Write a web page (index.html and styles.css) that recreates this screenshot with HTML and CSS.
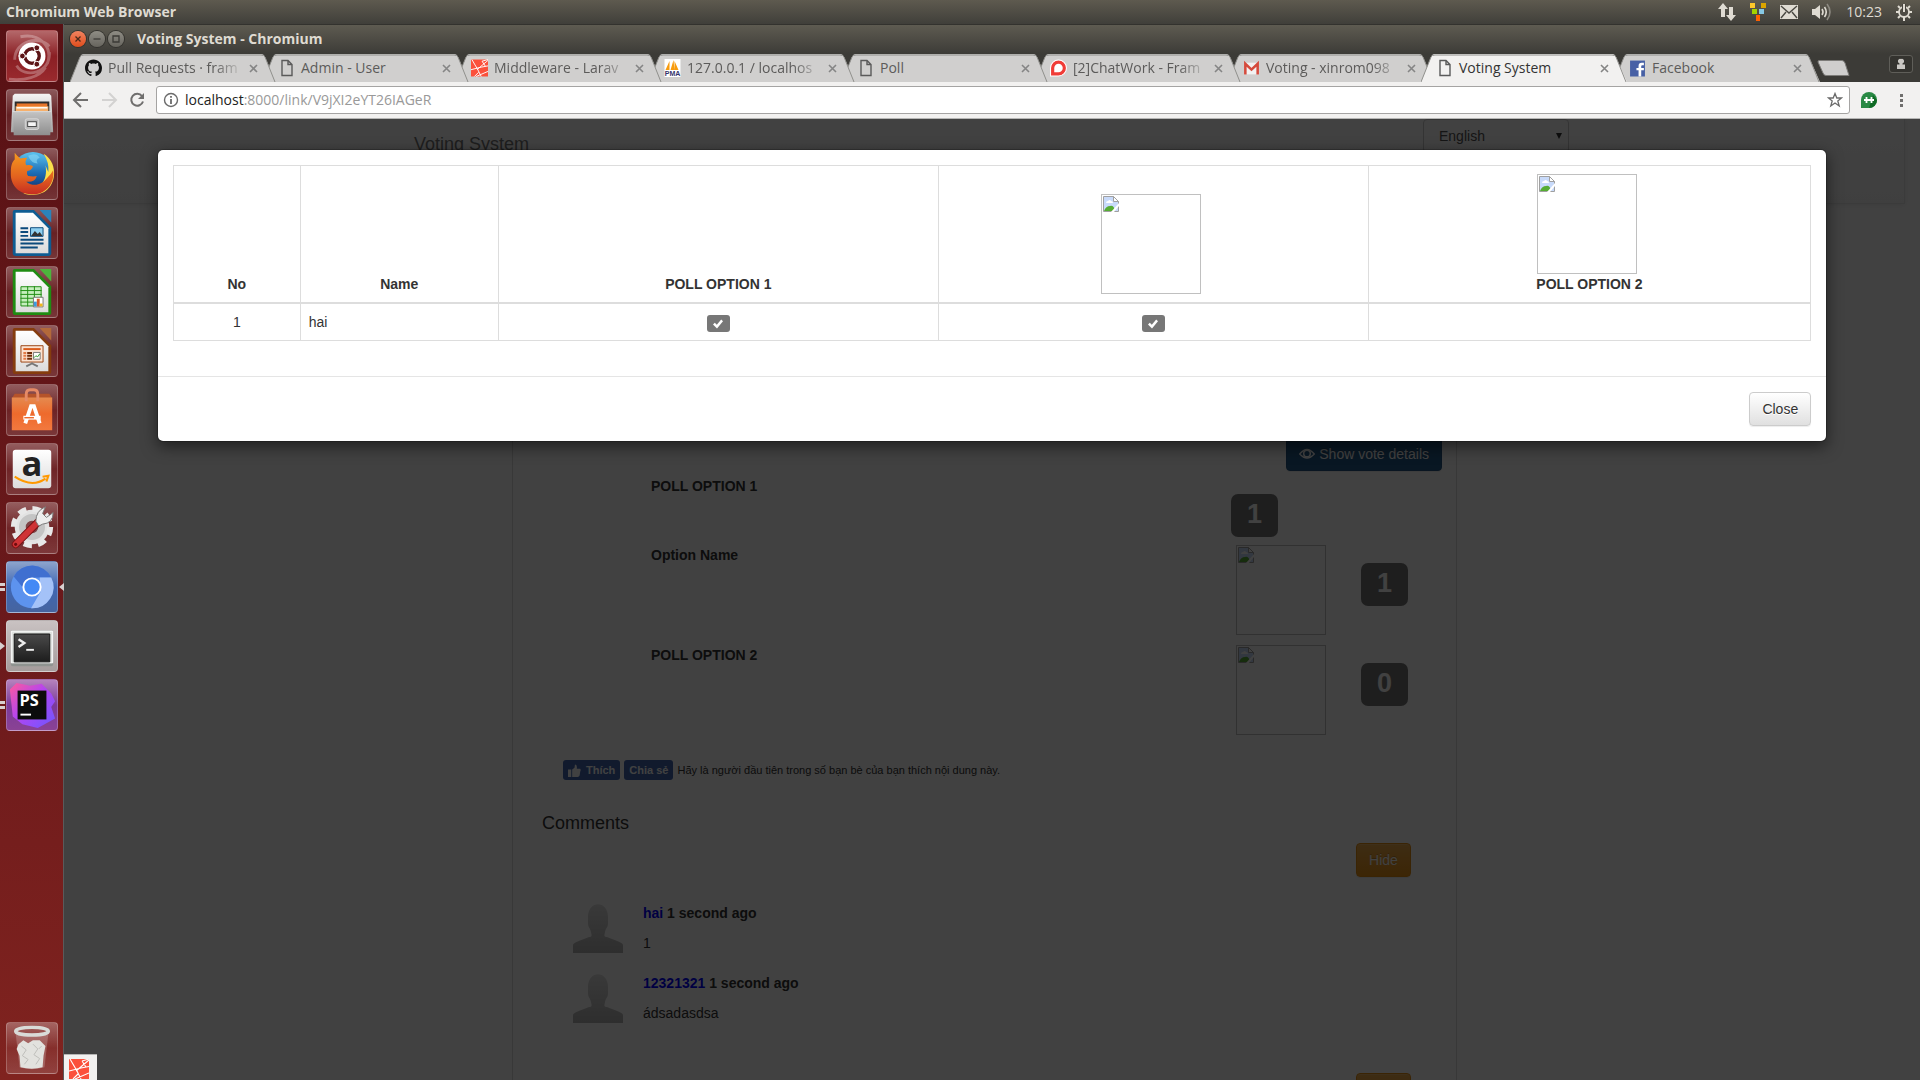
FILE: index.html
```html
<!DOCTYPE html>
<html lang="en">
<head>
<meta charset="utf-8">
<title>Voting System</title>
<link rel="stylesheet" href="styles.css">
</head>
<body>
<svg class="defs" aria-hidden="true">
  <defs>
    <linearGradient id="steel" x1="0" y1="0" x2="0" y2="1"><stop offset="0" stop-color="#f4f4f4"/><stop offset="1" stop-color="#a2a2a2"/></linearGradient>
    <linearGradient id="drawer" x1="0" y1="0" x2="0" y2="1"><stop offset="0" stop-color="#c4c4c4"/><stop offset="1" stop-color="#8e8e8e"/></linearGradient>
    <linearGradient id="sheet" x1="0" y1="0" x2="0" y2="1"><stop offset="0" stop-color="#ffffff"/><stop offset="1" stop-color="#dcdcdc"/></linearGradient>
    <linearGradient id="sky" x1="0" y1="0" x2="0" y2="1"><stop offset="0" stop-color="#5cc4ef"/><stop offset=".5" stop-color="#1e6fb8"/><stop offset="1" stop-color="#0b2a66"/></linearGradient>
    <linearGradient id="fox" x1="0" y1="0" x2="0" y2="1"><stop offset="0" stop-color="#f59a1f"/><stop offset=".6" stop-color="#e2601f"/><stop offset="1" stop-color="#c62d22"/></linearGradient>
    <linearGradient id="bag" x1="0" y1="0" x2="0" y2="1"><stop offset="0" stop-color="#e58a4f"/><stop offset=".5" stop-color="#ee6a2c"/><stop offset="1" stop-color="#f2793f"/></linearGradient>
    <linearGradient id="screen" x1="0" y1="0" x2="0" y2="1"><stop offset="0" stop-color="#4a4a4a"/><stop offset="1" stop-color="#1d1d1d"/></linearGradient>
    <linearGradient id="blob" x1="0" y1="0" x2="1" y2="1"><stop offset="0" stop-color="#ff5a9a"/><stop offset=".45" stop-color="#b345f1"/><stop offset="1" stop-color="#6b57ff"/></linearGradient>
    <linearGradient id="person" x1="0" y1="0" x2="0" y2="1"><stop offset="0" stop-color="#e0e0e0"/><stop offset="1" stop-color="#b4b4b4"/></linearGradient>
    <symbol id="tab-shape" viewBox="0 0 206 28" preserveAspectRatio="none">
      <path d="M0 28 L10 3 Q11 0 14 0 H191 Q194 0 195 3 L206 28Z" fill="currentColor"/>
      <path d="M0 28 L10 3 Q11 1 14 1 H191 Q194 1 195 3 L205 28" fill="none" stroke="#8f8f8c" vector-effect="non-scaling-stroke"/>
    </symbol>
    <symbol id="close-x" viewBox="0 0 9 9"><path d="M1 1 L8 8 M8 1 L1 8" fill="none" stroke="#858585" stroke-width="1.6"/></symbol>
    <symbol id="doc" viewBox="0 0 16 18"><path d="M3.500 1.500 H9.500 L13.500 5.500 V16.500 H3.500Z M9.500 1.500 V5.500 H13.500" fill="none" stroke="#5a5a5a" stroke-width="1.4"/></symbol>
    <symbol id="laravel" viewBox="0 0 20 20">
      <path fill="#fb503b" d="M0 0H20V20H0Z"/>
      <path fill="none" stroke="#fff" stroke-width="1.1" d="M0 12 L12 9 L20 7.500 M1 0 L8 12 L12 20 M6 20 L20 14 M7 12 L20 1 M13 2 L20 0 M13 2 L17 8 M4 20 L9 15"/>
    </symbol>
    <symbol id="broken" viewBox="0 0 16 16">
      <path d="M.5 .5 H10.500 L15.500 5.500 V15.500 H.5Z" fill="#c8dafa" stroke="#a0a0a0"/>
      <path d="M10.500 .5 V5.500 H15.500Z" fill="#fff" stroke="#a0a0a0"/>
      <path d="M3 7 q0-2 2-2 q2-2 3 0 q2 0 2 2Z" fill="#fff"/>
      <path d="M1 15 Q3 10 7 10 Q11 9 12 15Z" fill="#56ad33"/>
      <path d="M8 16 L16 7 V10 L11 16Z" fill="#fff"/>
    </symbol>
    <symbol id="check" viewBox="0 0 12 12"><path d="M1 6.500 L2.800 4.700 L4.800 6.700 L9.200 1.500 L11 3.200 L5 10.500Z" fill="#fff"/></symbol>
    <symbol id="avatar" viewBox="0 0 50 50"><path d="M15 14 C15 -3 35 -3 35 14 V20 C35 25 33 24 32 29 C31 33 31 34 34 34 C40 37 50 39 50 42 V50 H0 V42 C0 39 10 37 16 34 C19 34 19 33 18 29 C17 24 15 25 15 20Z" fill="url(#person)"/></symbol>
  </defs>
</svg>

<header class="panel">
  <span class="panel-title">Chromium Web Browser</span>
  <div class="indicators">
    <svg width="18" height="20" viewBox="0 0 18 20"><path fill="#dfdbd2" d="M5 1 L10 7 H7 V15 H3 V7 H0Z M13 19 L8 13 H11 V5 H15 V13 H18Z"/></svg>
    <svg width="16" height="18" viewBox="0 0 16 18"><path fill="#fcc72b" d="M0 0H5V5H0Z"/><path fill="#dba400" d="M11 0H16V5H11Z"/><path fill="#a4d300" d="M2 6H7V11H2Z"/><path fill="#86c8e4" d="M9 6H14V11H9Z"/><path fill="#ff5f00" d="M6 12H10V18H6Z"/></svg>
    <svg width="18" height="14" viewBox="0 0 18 14"><path fill="#dfdbd2" d="M0 0H18V14H0Z"/><path fill="none" stroke="#4a4842" stroke-width="1.4" d="M1 1 L9 8 L17 1 M1 13 L6 7 M17 13 L12 7"/></svg>
    <svg width="20" height="18" viewBox="0 0 20 18"><path fill="#dfdbd2" d="M0 6H3L8 2V16L3 12H0Z"/><path fill="none" stroke="#dfdbd2" stroke-width="1.6" d="M10 6 Q12 9 10 12 M12.500 4 Q16 9 12.500 14"/><path fill="none" stroke="#8d8a82" stroke-width="1.600" d="M15 1 Q21 9 15 17"/></svg>
    <time class="clock">10:23</time>
    <svg width="16" height="18" viewBox="0 0 16 18"><circle cx="8" cy="9" r="5" fill="none" stroke="#dfdbd2" stroke-width="1.800"/><path d="M8 1V9" stroke="#46443e" stroke-width="4"/><path stroke="#dfdbd2" stroke-width="2" d="M8 1V9 M8 14V18 M0 9H3 M13 9H16 M2 3L4 5 M14 3L12 5 M2 15L4 13 M14 15L12 13"/></svg>
  </div>
</header>

<div class="desktop">
  <nav class="launcher" aria-label="Launcher">
    <button class="tile tile-dash" aria-label="Dash"><svg viewBox="0 0 52 52">
      <path d="M8 30 C8 10 34 4 44 16 M44 22 C46 44 18 50 10 36 M14 6 C34 2 48 16 42 34 M2 50 C18 52 34 48 40 38" fill="none" stroke="#fff" stroke-opacity=".28" stroke-width="3"/>
      <circle cx="26" cy="26" r="14" fill="#fff"/><circle cx="26" cy="26" r="7.500" fill="none" stroke="#5c1517" stroke-width="3.600"/>
      <path d="M26 26 L12 26 M26 26 L33 14 M26 26 L33 38" stroke="#fff" stroke-width="1.600"/>
      <circle cx="26" cy="26" r="5.500" fill="#fff"/>
      <g fill="#5c1517" stroke="#fff"><circle cx="16" cy="26" r="3"/><circle cx="31" cy="17.500" r="3"/><circle cx="31" cy="34.500" r="3"/></g></svg></button>
    <button class="tile" aria-label="Files"><svg viewBox="0 0 52 52">
      <path d="M6 6 L8 4 H44 L46 6 L48 44 H4Z" fill="url(#steel)"/><path d="M8 12H44V23H8Z" fill="#2d2d2d"/><path d="M10 14H42V22H10Z" fill="#e8762b"/><path d="M9 17H43V22H9Z" fill="#f7b06b"/><path d="M10 18.500H42" stroke="#fff" stroke-width="1.500"/>
      <path d="M6 22 H46 L45 47 H7Z" fill="url(#drawer)"/><path d="M6 22.500H46" stroke="#dedede"/><rect x="19" y="30" width="14" height="11" rx="2" fill="#b9b9b9" stroke="#dadada"/><rect x="21.500" y="33" width="9" height="5" fill="#f5f5f5" stroke="#444"/></svg></button>
    <button class="tile" aria-label="Firefox"><svg viewBox="0 0 52 52">
      <circle cx="27" cy="24" r="21" fill="url(#sky)"/>
      <path d="M22 7 q8-4 12 2 q-5 2-2 6 q-7 0-10-8Z" fill="#8bd8f5" fill-opacity=".6"/>
      <path d="M38 5 C52 13 52 34 42 42 C36 48 24 49 17 46 C34 44 43 33 40 17 Q42 22 43 24 Q44 14 38 5Z" fill="#f9e04c"/>
      <path d="M48 22 C50 38 38 48 25 47 C12 47 3 37 4 24 C4 16 6 13 8 11 Q8 6 8 4 Q11 8 14 10 Q17 9 21 9 Q18 13 20 17 Q24 16 27 18 Q26 22 21 23 Q20 26 22 28 Q28 29 31 28 Q29 35 20 34 C28 40 36 37 41 31 Q46 26 48 22Z" fill="url(#fox)"/></svg></button>
    <button class="tile" aria-label="Writer"><svg viewBox="0 0 52 52">
      <path d="M8 2 H28 L46 20 V47 Q46 50 43 50 H9 Q6 50 6 47 V4 Q6 2 8 2Z" fill="#0e5c92"/><path d="M34 2 H46 V15Z" fill="#2b83ba"/><path d="M9 5 H27 L43 21 V47 H9Z" fill="url(#sheet)"/>
      <path stroke="#0b4a7c" stroke-width="2" d="M14 21H22 M14 25H22 M14 29H22 M14 33H38 M14 37H38 M14 41H32"/><path d="M24.500 20.500H37.500V29.500H24.500Z" fill="#8fd0f0" stroke="#0b4a7c"/><path d="M25 29 L29 24 L32 27 L34 25 L37 29Z" fill="#333"/></svg></button>
    <button class="tile" aria-label="Calc"><svg viewBox="0 0 52 52">
      <path d="M8 2 H28 L46 20 V47 Q46 50 43 50 H9 Q6 50 6 47 V4 Q6 2 8 2Z" fill="#1f8c12"/><path d="M34 2 H46 V15Z" fill="#4db53c"/><path d="M9 5 H27 L43 21 V47 H9Z" fill="url(#sheet)"/>
      <path d="M14.500 20.500H35.500V40.500H14.500Z" fill="#c6efbe" stroke="#1f8c12"/><path d="M14 24.500H36 M14 28.500H36 M14 32.500H36 M14 36.500H36 M21.500 20V41 M28.500 20V41" stroke="#1f8c12"/><path d="M27.500 31.500H37.500V41.500H27.500Z" fill="#fff" stroke="#777"/><path d="M28 36H31V41H28Z" fill="#3b9be0"/><path d="M31 33H34V41H31Z" fill="#d95a28"/><path d="M34 38H37V41H34Z" fill="#f0b81e"/></svg></button>
    <button class="tile" aria-label="Impress"><svg viewBox="0 0 52 52">
      <path d="M8 2 H28 L46 20 V47 Q46 50 43 50 H9 Q6 50 6 47 V4 Q6 2 8 2Z" fill="#853c0e"/><path d="M34 2 H46 V15Z" fill="#b3693a"/><path d="M9 5 H27 L43 21 V47 H9Z" fill="url(#sheet)"/>
      <path d="M14.500 20.500H37.500V37.500H14.500Z" fill="#fbe3d2" stroke="#9a4312"/><path d="M17 24H35" stroke="#d95a1a" stroke-width="2"/><path d="M17 28H20 M17 31H20 M17 34H20" stroke="#e27b46" stroke-width="2"/><path d="M21 28H26 M21 31H26 M21 34H26" stroke="#6f2c08" stroke-width="2"/><path d="M27.500 27.500H34.500V34.500H27.500Z" fill="#fff" stroke="#777"/><path d="M28 33L30 31L32 32L34 29" fill="none" stroke="#2c9a2c"/><path d="M26 38V40 M20 42L26 39L32 42" fill="none" stroke="#777" stroke-width="2"/></svg></button>
    <button class="tile" aria-label="Software Center"><svg viewBox="0 0 52 52">
      <path d="M5 14L8 9H44L47 14Z" fill="#b5532a"/><path d="M5 13H47V47H5Z" fill="url(#bag)"/><path d="M20 17V10Q20 5 24 5H28Q32 5 32 10V17" fill="none" stroke="#e58a66" stroke-width="3"/>
      <path d="M19 40 L25 22 H28 L34 40" fill="none" stroke="#fff" stroke-width="4"/><path d="M17 34H35" stroke="#fff" stroke-width="4"/><path d="M18 34H28" stroke="#ee6a2c" stroke-width="1.500"/></svg></button>
    <button class="tile" aria-label="Amazon"><svg viewBox="0 0 52 52">
      <rect x="6" y="6" width="40" height="40" rx="3" fill="url(#sheet)"/><text x="26" y="33" class="amazon-a">a</text><path d="M8 34 Q26 46 40 36 M37 34 L43 33 L41 39" fill="none" stroke="#f90" stroke-width="2.200"/></svg></button>
    <button class="tile" aria-label="System Settings"><svg viewBox="0 0 52 52">
      <circle cx="26" cy="25" r="18" fill="#e2e2e2"/><circle cx="26" cy="25" r="19" fill="none" stroke="#e8e8e8" stroke-width="6" stroke-dasharray="8.500 6.400"/><circle cx="26" cy="25" r="10" fill="#7e4346" stroke="#c4c4c4" stroke-width="7"/>
      <path d="M9 43 L32 20" stroke="#7a0f12" stroke-width="8" stroke-linecap="round"/><path d="M9 43 L32 20" stroke="#cf3336" stroke-width="6" stroke-linecap="round"/><circle cx="9" cy="43" r="1.600" fill="#6e0c0e"/>
      <path d="M30 19 Q30 8 40 4 L37 11 L41 15 L48 10 Q48 21 37 22 L33 24Z" fill="#ededed" stroke="#777"/></svg></button>
    <button class="tile tile-chromium" aria-label="Chromium"><svg viewBox="0 0 52 52">
      <circle cx="26" cy="26" r="22" fill="#5d93ee"/><path d="M7 15 A22 22 0 0 1 46 16 H26 L16 26Z" fill="#3f6fd0"/><path d="M46 16 A22 22 0 0 1 25 48 L35 31 L34 16Z" fill="#a4c2f8"/><circle cx="26" cy="26" r="9" fill="#4489f5" stroke="#fff" stroke-width="2"/></svg>
      <svg class="pips" viewBox="0 0 6 8"><path d="M0 0H5V3H0Z M0 5H5V8H0Z" fill="#d8d0d0"/></svg><svg class="focus" viewBox="0 0 5 8"><path d="M5 0V8L0 4Z" fill="#d8d0d0"/></svg></button>
    <button class="tile tile-terminal" aria-label="Terminal"><svg viewBox="0 0 52 52">
      <path d="M4 10H48V45Q48 47 46 47H6Q4 47 4 45Z" fill="#8f9390"/><path d="M4.500 10.500H47.500V43.500H4.500Z" fill="#dfe2df" stroke="#fff"/><path d="M7.500 13.500H44.500V42.500H7.500Z" fill="url(#screen)" stroke="#111"/><path d="M12 19L18 23L12 27" fill="none" stroke="#eee" stroke-width="2.500"/><path d="M20 30H28" stroke="#eee" stroke-width="2"/></svg>
      <svg class="pips" viewBox="0 0 6 8"><path d="M0 0L5 4L0 8Z" fill="#d8d0d0"/></svg></button>
    <button class="tile tile-storm" aria-label="PhpStorm"><svg viewBox="0 0 52 52">
      <path d="M3 10L10 3L24 6L36 4L46 14L50 22L46 28L50 40L32 50L16 46L6 38Z" fill="url(#blob)"/><path d="M11 11H41V41H11Z" fill="#0c0c0c"/><text x="13" y="27" class="storm-ps">PS</text><path d="M14 36H25" stroke="#fff" stroke-width="2"/></svg>
      <svg class="pips" viewBox="0 0 6 8"><path d="M0 0H5V3H0Z M0 5H5V8H0Z" fill="#d8d0d0"/></svg></button>
    <button class="tile tile-trash" aria-label="Trash"><svg viewBox="0 0 52 52">
      <path d="M9 11L13 46Q26 50 39 46L43 11Z" fill="#fff" fill-opacity=".2"/><path d="M12 22L17 18L22 21L27 18L34 18L40 24L38 34L37 46Q26 49 14 46L13 34L10 27Z" fill="#e2e2de"/><path d="M15 24L20 28L16 34L22 38L18 43 M27 22L32 27L28 33L34 37L30 43 M36 24L33 27" fill="none" stroke="#bdbdb9"/>
      <ellipse cx="26" cy="8.500" rx="17" ry="4" fill="none" stroke="#d9dbd8" stroke-width="3.500"/></svg></button>
  </nav>

  <main class="window">
    <div class="titlebar">
      <button class="wm wm-close" aria-label="Close window"><svg viewBox="0 0 16 16"><path d="M5.500 5.500L10.500 10.500M10.500 5.500L5.500 10.500" stroke="#4a2a1c" stroke-width="1.300"/></svg></button>
      <button class="wm" aria-label="Minimize"><svg viewBox="0 0 16 16"><path d="M4.500 8H11.500" stroke="#3b3a36" stroke-width="1.300"/></svg></button>
      <button class="wm" aria-label="Maximize"><svg viewBox="0 0 16 16"><path d="M5 5H11V11H5Z" fill="none" stroke="#3b3a36" stroke-width="1.300"/></svg></button>
      <span class="window-title">Voting System - Chromium</span>
    </div>

    <div class="tabstrip">
      <div class="tab"><svg class="shape"><use href="#tab-shape"/></svg><svg class="fav" viewBox="0 0 16 16"><path fill="#111" d="M8 0C3.580 0 0 3.580 0 8c0 3.540 2.290 6.530 5.470 7.590.4.070.55-.17.55-.38 0-.19-.01-.82-.01-1.490-2.010.37-2.530-.49-2.690-.94-.09-.23-.48-.94-.82-1.130-.28-.15-.68-.52-.01-.53.63-.01 1.080.58 1.230.82.72 1.210 1.870.87 2.330.66.07-.52.28-.87.51-1.070-1.780-.2-3.640-.89-3.640-3.950 0-.87.31-1.590.82-2.150-.08-.2-.36-1.020.08-2.120 0 0 .67-.21 2.200.82.64-.18 1.320-.27 2-.27s1.360.09 2 .27c1.530-1.040 2.200-.82 2.200-.82.44 1.100.16 1.920.08 2.120.51.56.82 1.270.82 2.150 0 3.070-1.870 3.750-3.650 3.950.29.25.54.73.54 1.480 0 1.070-.01 1.930-.01 2.200 0 .21.15.46.55.38A8.010 8.010 0 0 0 16 8c0-4.420-3.580-8-8-8z"/></svg><span class="tab-title tab-title-long">Pull Requests · fram</span><button class="tab-close" aria-label="Close tab"><svg><use href="#close-x"/></svg></button></div>
      <div class="tab"><svg class="shape"><use href="#tab-shape"/></svg><svg class="fav"><use href="#doc"/></svg><span class="tab-title">Admin - User</span><button class="tab-close" aria-label="Close tab"><svg><use href="#close-x"/></svg></button></div>
      <div class="tab"><svg class="shape"><use href="#tab-shape"/></svg><svg class="fav"><use href="#laravel"/></svg><span class="tab-title tab-title-long">Middleware - Larav</span><button class="tab-close" aria-label="Close tab"><svg><use href="#close-x"/></svg></button></div>
      <div class="tab"><svg class="shape"><use href="#tab-shape"/></svg><svg class="fav" viewBox="0 0 16 18"><path fill="#fff" d="M0 0H16V18H0Z"/><path fill="#f89c0e" d="M5 2L1 11H5Z M9 1L6 11H10Z M10 2L14 11H10Z"/><text x="8" y="17" class="pma">PMA</text></svg><span class="tab-title tab-title-long">127.0.0.1 / localhos</span><button class="tab-close" aria-label="Close tab"><svg><use href="#close-x"/></svg></button></div>
      <div class="tab"><svg class="shape"><use href="#tab-shape"/></svg><svg class="fav"><use href="#doc"/></svg><span class="tab-title">Poll</span><button class="tab-close" aria-label="Close tab"><svg><use href="#close-x"/></svg></button></div>
      <div class="tab"><svg class="shape"><use href="#tab-shape"/></svg><svg class="fav" viewBox="0 0 16 16"><path fill="#f03c37" stroke="#fff" d="M8 .5A7.500 7.500 0 1 1 8 15.500H.5V8A7.500 7.500 0 0 1 8 .5Z"/><path fill="#fff" d="M8 4A4 4 0 1 1 8 12H4V8A4 4 0 0 1 8 4Z"/></svg><span class="tab-title tab-title-long">[2]ChatWork - Fram</span><button class="tab-close" aria-label="Close tab"><svg><use href="#close-x"/></svg></button></div>
      <div class="tab"><svg class="shape"><use href="#tab-shape"/></svg><svg class="fav" viewBox="0 0 16 16"><path fill="#f2f2f2" d="M1 3H15V14H1Z"/><path fill="none" stroke="#d54b3d" stroke-width="2.400" d="M2.200 14V4L8 9.500L13.800 4V14"/></svg><span class="tab-title tab-title-long">Voting - xinrom098</span><button class="tab-close" aria-label="Close tab"><svg><use href="#close-x"/></svg></button></div>
      <div class="tab tab-active"><svg class="shape"><use href="#tab-shape"/></svg><svg class="fav"><use href="#doc"/></svg><span class="tab-title">Voting System</span><button class="tab-close" aria-label="Close tab"><svg><use href="#close-x"/></svg></button></div>
      <div class="tab"><svg class="shape"><use href="#tab-shape"/></svg><svg class="fav" viewBox="0 0 16 16"><path fill="#4760a5" d="M1 1H15V16H1Z"/><path fill="#fff" d="M9 16V10H7V8H9V6Q9 3 12 3H14V5.300H12.500Q11.500 5.300 11.500 6.300V8H14V10H11.500V16Z"/></svg><span class="tab-title">Facebook</span><button class="tab-close" aria-label="Close tab"><svg><use href="#close-x"/></svg></button></div>
      <button class="new-tab" aria-label="New tab"><svg viewBox="0 0 33 16"><path d="M2 .5H25Q27 .5 28 3L32 15.500H9Q7 15.500 6 13L1 2Q1 .5 2 .5Z" fill="#cfcecd" stroke="#7d7c79"/></svg></button>
      <button class="profile" aria-label="Profile"><svg viewBox="0 0 10 12"><path fill="#c9c7c3" d="M5 1A2.300 2.300 0 0 1 6.500 5.500V6.500H9V11H1V6.500H3.500V5.500A2.300 2.300 0 0 1 5 1Z"/></svg></button>
    </div>

    <div class="toolbar">
      <button class="tool" aria-label="Back"><svg viewBox="0 0 18 18"><path d="M9 2L2 9L9 16M2 9H16" fill="none" stroke="#6f6e6d" stroke-width="2"/></svg></button>
      <button class="tool" aria-label="Forward"><svg viewBox="0 0 18 18"><path d="M9 2L16 9L9 16M16 9H2" fill="none" stroke="#d3d2d1" stroke-width="2"/></svg></button>
      <button class="tool" aria-label="Reload"><svg viewBox="0 0 18 18"><path d="M14 5A6 6 0 1 0 15 10.500" fill="none" stroke="#6f6e6d" stroke-width="2"/><path d="M16 2V8H10Z" fill="#6f6e6d"/></svg></button>
      <div class="omnibox">
        <svg class="info" viewBox="0 0 16 16"><circle cx="8" cy="8" r="6.500" fill="none" stroke="#6b6b6b" stroke-width="1.400"/><path d="M8 4V5.800M8 7V12" stroke="#6b6b6b" stroke-width="1.800"/></svg>
        <a class="url" href="#"><span class="host">localhost</span>:8000/link/V9jXI2eYT26IAGeR</a>
        <button class="star" aria-label="Bookmark"><svg viewBox="0 0 16 16"><path d="M8 1.500L9.800 6H14.500L10.800 9L12.200 14L8 11L3.800 14L5.200 9L1.500 6H6.200Z" fill="none" stroke="#6b6b6b" stroke-width="1.300"/></svg></button>
      </div>
      <button class="tool" aria-label="Hangouts"><svg viewBox="0 0 18 18"><path d="M9 1A8 8 0 1 1 9 17H1V9A8 8 0 0 1 9 1Z" fill="#2a8a45"/><path d="M17 9A8 8 0 0 1 9 17L13 4Z" fill="#0f6b24"/><path d="M4 9H14M6.500 6V12M11.500 6V12" stroke="#fff" stroke-width="1.800"/></svg></button>
      <button class="tool tool-menu" aria-label="Menu"><svg viewBox="0 0 18 18"><path fill="#6f6e6d" d="M8 3h3v3H8Z M8 8h3v3H8Z M8 13h3v3H8Z"/></svg></button>
    </div>

    <div class="page">
      <div class="document">
        <div class="navbar">
          <div class="container">
            <a class="brand" href="#">Voting System</a>
            <div class="language">
              <select class="language-select" aria-label="Language"><option>English</option></select>
              <svg class="caret" viewBox="0 0 6 6"><path d="M0 0H6L3 6Z" fill="#333"/></svg>
            </div>
          </div>
        </div>

        <section class="card">
          <div class="details-bar">
            <button class="btn btn-primary"><svg class="eye" viewBox="0 0 16 14"><path d="M.7 7Q8-2 15.300 7Q8 15 .7 7Z" fill="none" stroke="#fff" stroke-width="1.300"/><circle cx="8" cy="6.500" r="3.300" fill="none" stroke="#fff" stroke-width="1.500"/></svg> Show vote details</button>
          </div>
          <div class="option option-text"><b class="option-name">POLL OPTION 1</b><span class="count">1</span></div>
          <div class="option"><b class="option-name">Option Name</b><span class="picture picture-small"><svg><use href="#broken"/></svg></span><span class="count">1</span></div>
          <div class="option"><b class="option-name">POLL OPTION 2</b><span class="picture picture-small"><svg><use href="#broken"/></svg></span><span class="count">0</span></div>

          <div class="social">
            <button class="fb"><svg class="thumb" viewBox="0 0 14 14"><path fill="#fff" d="M0 6H3.500V14H0Z M4.500 6L7 4L7.500 0.500Q10 .3 9.500 5H13Q14.200 6 13.200 8L12.500 12.500Q12 14 10.500 14H4.500Z"/></svg>Thích</button>
            <button class="fb">Chia sẻ</button>
            <span class="fb-note">Hãy là người đầu tiên trong số bạn bè của bạn thích nội dung này.</span>
          </div>

          <h4 class="comments-title">Comments</h4>
          <div class="hide-bar"><button class="btn btn-warning">Hide</button></div>
          <article class="comment"><svg class="avatar"><use href="#avatar"/></svg><div><p class="comment-head"><span class="author">hai</span> 1 second ago</p><p class="comment-text">1</p></div></article>
          <article class="comment"><svg class="avatar"><use href="#avatar"/></svg><div><p class="comment-head"><span class="author">12321321</span> 1 second ago</p><p class="comment-text">ádsadasdsa</p></div></article>
          <div class="hide-bar hide-bar-end"><button class="btn btn-warning" aria-label="Post"></button></div>
        </section>
      </div>

      <div class="backdrop">
        <div class="dialog" role="dialog" aria-label="Vote details">
          <div class="dialog-body">
            <table class="votes">
              <colgroup><col class="c-no"><col class="c-name"><col class="c-first"><col class="c-second"><col class="c-third"></colgroup>
              <thead><tr>
                <th>No</th><th>Name</th><th>POLL OPTION 1</th>
                <th><span class="picture picture-cell"><svg><use href="#broken"/></svg></span></th>
                <th><span class="picture picture-cell"><svg><use href="#broken"/></svg></span><br>POLL OPTION 2</th>
              </tr></thead>
              <tbody><tr>
                <td class="center">1</td><td>hai</td>
                <td class="center"><span class="tick"><svg><use href="#check"/></svg></span></td>
                <td class="center"><span class="tick"><svg><use href="#check"/></svg></span></td>
                <td></td>
              </tr></tbody>
            </table>
          </div>
          <div class="dialog-footer"><button class="btn btn-default">Close</button></div>
        </div>
      </div>

      <div class="status"><svg><use href="#laravel"/></svg></div>
    </div>
  </main>
</div>
</body>
</html>
```
FILE: styles.css
```css
* { box-sizing: border-box; }

body {
  margin: 0;
  height: 100vh;
  display: flex;
  flex-direction: column;
  overflow: hidden;
  font-family: "Liberation Sans", Arial, sans-serif;
  font-size: 14px;
  line-height: 20px;
  color: #333;
}

button {
  margin: 0;
  padding: 0;
  border: 0;
  background: none;
  font: inherit;
  color: inherit;
}

svg { display: block; }
p, h4 { margin: 0; }
.defs { position: absolute; width: 0; height: 0; }

/* top panel */
.panel {
  flex: none;
  height: 24px;
  padding: 0 8px 0 6px;
  display: flex;
  align-items: center;
  justify-content: space-between;
  background: linear-gradient(#5e5a4f, #403f3a);
  color: #dfdbd2;
  font-family: "Open Sans", "Noto Sans", sans-serif;
}
.panel-title, .window-title { font-size: 14px; font-weight: 700; }
.indicators { display: flex; align-items: center; gap: 14px; }
.clock { font-size: 14px; }

.desktop { flex: 1; min-height: 0; display: flex; }

/* launcher */
.launcher {
  flex: none;
  width: 64px;
  padding: 6px 5px 6px 6px;
  display: flex;
  flex-direction: column;
  gap: 7px;
  border-right: 1px solid #5a5a5a;
  background: linear-gradient(#581114, #6a191b 55%, #80231f);
}
.tile {
  position: relative;
  width: 52px;
  height: 52px;
  border: 1px solid rgba(255, 255, 255, .22);
  border-radius: 4px;
  background: linear-gradient(rgba(255, 255, 255, .3), rgba(255, 255, 255, .06) 50%, rgba(255, 255, 255, .14));
}
.tile > svg:first-child { width: 50px; height: 50px; }
.tile-dash { background: linear-gradient(#b4686a, #8a1f24 50%, #9a2a2e); }
.tile-chromium { background: linear-gradient(#8da4cc, #3f67b4 50%, #46649f); }
.tile-terminal { background: linear-gradient(#c9c2c2, #a59c9c); }
.tile-storm { background: linear-gradient(#b583bd, #7b3a9a 50%, #8a4294); }
.tile-trash { margin-top: auto; }
.pips { position: absolute; left: -7px; top: 21px; width: 6px; height: 8px; }
.focus { position: absolute; right: -7px; top: 21px; width: 5px; height: 8px; }
.amazon-a { font: 700 36px "Open Sans", sans-serif; text-anchor: middle; fill: #222; }
.storm-ps { font: 700 17px "Open Sans", sans-serif; fill: #fff; }

/* browser window */
.window {
  flex: 1;
  min-width: 0;
  display: flex;
  flex-direction: column;
  background: #3c3b37;
}
.titlebar {
  flex: none;
  height: 30px;
  padding: 0 6px 1px;
  display: flex;
  align-items: center;
  gap: 3px;
  background: linear-gradient(#5e5b51, #3c3b37);
  border-top: 1px solid #33322e;
  color: #dfdbd2;
  font-family: "Open Sans", "Noto Sans", sans-serif;
}
.wm {
  width: 16px;
  height: 16px;
  border-radius: 50%;
  background: linear-gradient(#8f8d85, #66645d);
  box-shadow: 0 0 0 1px #33322e;
}
.wm-close { background: linear-gradient(#f28360, #df4d1c); }
.window-title { margin-left: 10px; }

.tabstrip {
  flex: none;
  height: 28px;
  padding: 0 7px 0 6px;
  display: flex;
  isolation: isolate;
}
.tab {
  position: relative;
  flex: 0 1 206px;
  min-width: 0;
  margin-right: -13px;
  padding: 0 18px 0 15px;
  display: flex;
  align-items: center;
  color: #d0cfce;
  z-index: 1;
}
.tab:nth-child(1) { z-index: 9; }
.tab:nth-child(2) { z-index: 8; }
.tab:nth-child(3) { z-index: 7; }
.tab:nth-child(4) { z-index: 6; }
.tab:nth-child(5) { z-index: 5; }
.tab:nth-child(6) { z-index: 4; }
.tab:nth-child(7) { z-index: 3; }
.tab.tab-active { z-index: 10; color: #f2f1f0; }
.shape { position: absolute; inset: 0; z-index: -1; width: 100%; height: 100%; }
.fav { flex: none; width: 17px; height: 18px; }
.pma { font: 700 7px "Liberation Sans", sans-serif; text-anchor: middle; fill: #33336b; }
.tab-title {
  flex: 1;
  margin-left: 6px;
  white-space: nowrap;
  font-family: "Open Sans", "Noto Sans", sans-serif;
  font-size: 14px;
  color: #5c5b5a;
}
.tab-title-long {
  -webkit-mask-image: linear-gradient(90deg, #000 78%, transparent);
  mask-image: linear-gradient(90deg, #000 78%, transparent);
}
.tab-active .tab-title { color: #333; }
.tab-close { margin-left: 5px; }
.tab-close svg { width: 9px; height: 9px; }
.new-tab { align-self: center; margin-left: 10px; }
.new-tab svg { width: 33px; height: 16px; }
.profile {
  width: 24px;
  height: 18px;
  margin: 1px 0 0 auto;
  border: 1px solid #5f5e59;
  border-radius: 3px;
  background: #34332f;
  display: flex;
  align-items: center;
  justify-content: center;
}
.profile svg { width: 10px; height: 12px; }

.toolbar {
  flex: none;
  height: 37px;
  padding: 0 10px 0 8px;
  display: flex;
  align-items: center;
  gap: 10px;
  background: #f2f1f0;
  border-bottom: 1px solid #b5b5b4;
}
.tool svg { width: 18px; height: 18px; }
.tool-menu { margin-left: 4px; }
.omnibox {
  flex: 1;
  height: 28px;
  padding: 0 6px;
  display: flex;
  align-items: center;
  gap: 6px;
  background: #fff;
  border: 1px solid #a5a4a3;
  border-radius: 3px;
}
.info, .star svg { width: 16px; height: 16px; }
.url {
  flex: 1;
  font-family: "Open Sans", "Noto Sans", sans-serif;
  font-size: 14px;
  color: #999;
  text-decoration: none;
}
.host { color: #222; }

/* page content */
.page {
  position: relative;
  flex: 1;
  min-height: 0;
  overflow: hidden;
  background: #fff;
}
.document { margin-right: 15px; }
.navbar {
  height: 85px;
  background: linear-gradient(#fff, #f8f8f8);
  border: 1px solid #e7e7e7;
  border-top: 0;
  border-left: 0;
  box-shadow: 0 1px 5px rgba(0, 0, 0, .08);
}
.container {
  max-width: 1170px;
  margin: 0 auto;
  display: flex;
  align-items: flex-start;
  justify-content: space-between;
}
.brand {
  padding: 15px;
  font-size: 18px;
  color: #777;
  text-decoration: none;
}
.language { position: relative; width: 146px; }
.language-select {
  appearance: none;
  width: 100%;
  height: 34px;
  padding: 0 15px;
  border: 1px solid #ccc;
  border-radius: 4px;
  background: transparent;
  font: inherit;
  color: #555;
}
.caret { position: absolute; right: 7px; top: 14px; width: 6px; height: 6px; }

.card {
  max-width: 945px;
  margin: 20px auto 0;
  padding: 212px 14px 0 29px;
  border: 1px solid #ddd;
  border-radius: 4px;
}
.details-bar { display: flex; justify-content: flex-end; margin-bottom: 5px; }
.btn {
  display: inline-flex;
  align-items: center;
  justify-content: center;
  height: 34px;
  padding: 0 12px;
  border: 1px solid;
  border-radius: 4px;
  color: #fff;
  text-shadow: 0 -1px 0 rgba(0, 0, 0, .2);
  box-shadow: inset 0 1px 0 rgba(255, 255, 255, .15), 0 1px 1px rgba(0, 0, 0, .075);
}
.btn-primary { background: #265a88; border-color: #245580; }
.btn-warning { min-width: 55px; background: linear-gradient(#f0ad4e, #eb9316); border-color: #e38d13; }
.btn-default {
  background: linear-gradient(#fff, #e0e0e0);
  border-color: #ccc;
  color: #333;
  text-shadow: 0 1px 0 #fff;
}
.eye { width: 16px; height: 14px; margin-right: 4px; }

.option {
  min-height: 100px;
  padding-left: 109px;
  display: grid;
  grid-template-columns: 580px 130px 1fr;
  align-items: start;
}
.option-text { min-height: 69px; }
.count {
  justify-self: start;
  width: 47px;
  height: 43px;
  margin-top: 18px;
  padding-bottom: 3px;
  display: flex;
  align-items: center;
  justify-content: center;
  border-radius: 7px;
  background: #777;
  color: #fff;
  font-size: 27px;
  font-weight: 700;
}
.picture {
  display: inline-block;
  width: 100px;
  height: 100px;
  padding: 1px;
  border: 1px solid #c0c0c0;
  vertical-align: middle;
}
.picture-cell { margin-right: 4px; }
.picture-small { width: 90px; height: 90px; margin-left: 5px; }
.picture svg { width: 16px; height: 16px; }

.social {
  margin: 15px 0 0 21px;
  display: flex;
  align-items: center;
  gap: 4px;
  font-size: 11px;
}
.fb {
  height: 20px;
  padding: 0 5px;
  display: flex;
  align-items: center;
  gap: 5px;
  border-radius: 3px;
  background: #4267b2;
  color: #fff;
  font-weight: 700;
}
.thumb { width: 13px; height: 13px; }

.comments-title { margin-top: 33px; font-size: 18px; font-weight: 400; color: #333; }
.hide-bar { display: flex; justify-content: flex-end; margin: 10px 31px 26px 0; }
.hide-bar-end { margin-top: 50px; }
.comment { margin: 0 0 20px 31px; display: flex; gap: 20px; }
.avatar { width: 50px; height: 50px; }
.comment-head { margin-bottom: 10px; font-weight: 700; }
.author { color: #00f; }

/* dialog */
.backdrop {
  position: absolute;
  inset: 0;
  padding-top: 30px;
  background: rgba(0, 0, 0, .745);
}
.dialog {
  width: 90%;
  margin: 0 auto;
  background: #fff;
  background-clip: padding-box;
  border: 1px solid rgba(0, 0, 0, .2);
  border-radius: 6px;
  box-shadow: 0 5px 15px rgba(0, 0, 0, .5);
}
.dialog-body { padding: 15px 15px 35px; }
.dialog-footer { padding: 15px; display: flex; justify-content: flex-end; border-top: 1px solid #e5e5e5; }
.votes { width: 100%; table-layout: fixed; border-collapse: collapse; }
.votes th, .votes td { padding: 8px; border: 1px solid #ddd; text-align: left; }
.votes th { vertical-align: bottom; text-align: center; border-bottom-width: 2px; }
.votes td { height: 37px; vertical-align: top; }
.votes .center { text-align: center; }
.c-no { width: 127px; }
.c-name { width: 198px; }
.c-first { width: 440px; }
.c-second { width: 430px; }
.tick {
  display: inline-flex;
  width: 23px;
  height: 17px;
  margin-top: 3px;
  align-items: center;
  justify-content: center;
  border-radius: 3px;
  background: #777;
  vertical-align: top;
}
.tick svg { width: 12px; height: 12px; }

.status {
  position: absolute;
  left: 0;
  bottom: 0;
  width: 33px;
  height: 26px;
  padding: 4px 0 0 5px;
  background: #f2f1f0;
  border-top: 1px solid #b5b5b4;
}
.status svg { width: 20px; height: 20px; }
```
